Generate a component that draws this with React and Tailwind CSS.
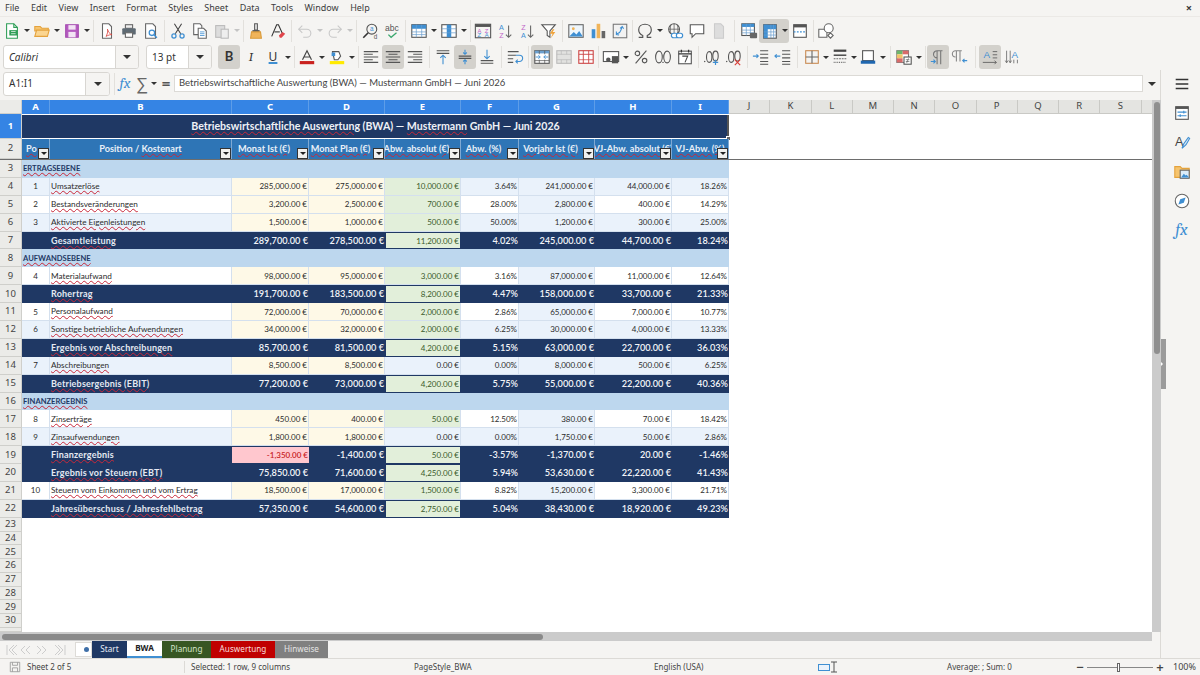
const sheetFont = { fontFamily: "Lato, 'Liberation Sans', sans-serif" }

const rows = [
  { n: 3, type: "section", label: "ERTRAGSEBENE" },
  { n: 4, type: "item", tint: true, pos: 1, label: "Umsatzerlöse", v: ["285,000.00 €", "275,000.00 €", "10,000.00 €", "3.64%", "241,000.00 €", "44,000.00 €", "18.26%"] },
  { n: 5, type: "item", pos: 2, label: "Bestandsveränderungen", v: ["3,200.00 €", "2,500.00 €", "700.00 €", "28.00%", "2,800.00 €", "400.00 €", "14.29%"] },
  { n: 6, type: "item", tint: true, pos: 3, label: "Aktivierte Eigenleistungen", v: ["1,500.00 €", "1,000.00 €", "500.00 €", "50.00%", "1,200.00 €", "300.00 €", "25.00%"] },
  { n: 7, type: "total", label: "Gesamtleistung", v: ["289,700.00 €", "278,500.00 €", "11,200.00 €", "4.02%", "245,000.00 €", "44,700.00 €", "18.24%"] },
  { n: 8, type: "section", label: "AUFWANDSEBENE" },
  { n: 9, type: "item", pos: 4, label: "Materialaufwand", v: ["98,000.00 €", "95,000.00 €", "3,000.00 €", "3.16%", "87,000.00 €", "11,000.00 €", "12.64%"] },
  { n: 10, type: "total", label: "Rohertrag", v: ["191,700.00 €", "183,500.00 €", "8,200.00 €", "4.47%", "158,000.00 €", "33,700.00 €", "21.33%"] },
  { n: 11, type: "item", pos: 5, label: "Personalaufwand", v: ["72,000.00 €", "70,000.00 €", "2,000.00 €", "2.86%", "65,000.00 €", "7,000.00 €", "10.77%"] },
  { n: 12, type: "item", tint: true, pos: 6, label: "Sonstige betriebliche Aufwendungen", v: ["34,000.00 €", "32,000.00 €", "2,000.00 €", "6.25%", "30,000.00 €", "4,000.00 €", "13.33%"] },
  { n: 13, type: "total", label: "Ergebnis vor Abschreibungen", v: ["85,700.00 €", "81,500.00 €", "4,200.00 €", "5.15%", "63,000.00 €", "22,700.00 €", "36.03%"] },
  { n: 14, type: "item", tint: true, pos: 7, label: "Abschreibungen", v: ["8,500.00 €", "8,500.00 €", "0.00 €", "0.00%", "8,000.00 €", "500.00 €", "6.25%"] },
  { n: 15, type: "total", label: "Betriebsergebnis (EBIT)", v: ["77,200.00 €", "73,000.00 €", "4,200.00 €", "5.75%", "55,000.00 €", "22,200.00 €", "40.36%"] },
  { n: 16, type: "section", label: "FINANZERGEBNIS" },
  { n: 17, type: "item", pos: 8, label: "Zinserträge", v: ["450.00 €", "400.00 €", "50.00 €", "12.50%", "380.00 €", "70.00 €", "18.42%"] },
  { n: 18, type: "item", tint: true, pos: 9, label: "Zinsaufwendungen", v: ["1,800.00 €", "1,800.00 €", "0.00 €", "0.00%", "1,750.00 €", "50.00 €", "2.86%"] },
  { n: 19, type: "total", negative: true, label: "Finanzergebnis", v: ["-1,350.00 €", "-1,400.00 €", "50.00 €", "-3.57%", "-1,370.00 €", "20.00 €", "-1.46%"] },
  { n: 20, type: "total", label: "Ergebnis vor Steuern (EBT)", v: ["75,850.00 €", "71,600.00 €", "4,250.00 €", "5.94%", "53,630.00 €", "22,220.00 €", "41.43%"] },
  { n: 21, type: "item", pos: 10, label: "Steuern vom Einkommen und vom Ertrag", v: ["18,500.00 €", "17,000.00 €", "1,500.00 €", "8.82%", "15,200.00 €", "3,300.00 €", "21.71%"] },
  { n: 22, type: "total", label: "Jahresüberschuss / Jahresfehlbetrag", v: ["57,350.00 €", "54,600.00 €", "2,750.00 €", "5.04%", "38,430.00 €", "18,920.00 €", "49.23%"] },
]

const valueCols = ["w-[77px]", "w-[76px]", "w-[76px]", "w-[58px]", "w-[76px]", "w-[77px]", "w-[57px]"]
const restCols = ["J", "K", "L", "M", "N", "O", "P", "Q", "R", "S"]
const emptyRows = [23, 24, 25, 26, 27, 28, 29, 30]

const wavy = "underline decoration-wavy decoration-[#c8283a] decoration-[0.7px] underline-offset-1"

// toolbar pieces
const S = ({ children, vb = "0 0 20 20", className = "w-[18px] h-[18px]" }) => (
  <svg viewBox={vb} className={className} fill="none" strokeWidth="1.2">{children}</svg>
)

function Tool({ children, active, className = "" }) {
  return (
    <div className={`w-[22px] h-[24px] shrink-0 flex items-center justify-center rounded-[3px] ${active ? "bg-[#d3d1cc]" : ""} ${className}`}>
      {children}
    </div>
  )
}

const Arrow = ({ dim, className = "w-[8px]" }) => (
  <div className={`h-[24px] shrink-0 flex items-center justify-center ${className}`}>
    <div className={`w-0 h-0 border-l-[3px] border-r-[3px] border-t-[3px] border-l-transparent border-r-transparent ${dim ? "border-t-[#c4c4c4]" : "border-t-[#333]"}`} />
  </div>
)

const Sep = ({ className = "w-[5px]" }) => (
  <div className={`shrink-0 h-[22px] flex justify-center ${className}`}>
    <div className="w-px h-full bg-[#e2e0dc]" />
  </div>
)

const gr = "#555"
const bl = "#3f8fd2"

const NewDoc = () => <S><path d="M4 2h8l4 4v12H4z" stroke="#2f9e57" fill="#fff" /><path d="M12 2v4h4" stroke="#2f9e57" /><rect x="7" y="9" width="9" height="6" fill="#2f9e57" /><path d="M9 10.5h5M9 13h5" stroke="#fff" strokeWidth=".8" /></S>
const Open = () => <S><path d="M2 5h6l2 2h7v3H2z" fill="#f6c46e" stroke="#e4a23c" /><path d="M2 16l2-7h14l-2 7z" fill="#fbd590" stroke="#e4a23c" /></S>
const Save = () => <S><path d="M3 3h14v14H3z" fill="#b55bc0" stroke="#a349ae" /><rect x="6" y="3.5" width="8" height="5" fill="#f2e3f4" /><rect x="6" y="11" width="8" height="6" fill="#f2e3f4" /></S>
const Pdf = () => <S><path d="M5 2h7l3 3v13H5z" fill="#fff" stroke="#666" /><path d="M9 16c2-4 2-6 1.5-8 1 3 2 5 5 6-2 0-4 .5-6.500 2z" stroke="#d9403a" strokeWidth=".9" /></S>
const Print = () => <S><rect x="6" y="3" width="8" height="4" fill="#eee" stroke="#666" /><rect x="2.500" y="7" width="15" height="7" rx="1" fill="#5e6a73" /><rect x="6" y="12" width="8" height="5" fill="#fff" stroke="#666" /></S>
const Preview = () => <S><path d="M4 2h8l3 3v13H4z" fill="#fff" stroke="#666" /><circle cx="11" cy="12" r="3" stroke={bl} strokeWidth="1.400" /><path d="M13 14l3.500 3.500" stroke={bl} strokeWidth="1.600" /></S>
const Cut = () => <S><path d="M6 2l7 11M14 2L7 13" stroke="#444" /><circle cx="5.500" cy="15.500" r="2.300" stroke={bl} strokeWidth="1.400" /><circle cx="14.500" cy="15.500" r="2.300" stroke={bl} strokeWidth="1.400" /></S>
const Copy = () => <S><path d="M3 2h7l2 2v10H3z" fill="#fff" stroke="#666" /><path d="M8 7h6l3 3v8H8z" fill="#fff" stroke="#666" /><path d="M10 11h5M10 13h5M10 15h5" stroke={bl} strokeWidth=".9" /></S>
const Paste = () => <S><rect x="3" y="4" width="10" height="13" fill="#ddd" stroke="#bbb" /><rect x="9" y="8" width="8" height="10" fill="#eee" stroke="#bbb" /></S>
const Clone = () => <S><path d="M8.500 2h3v7h-3z" stroke="#555" fill="#eee" /><path d="M6 9h8v2H6z" fill="#555" /><path d="M5 11h10l1 7H4z" fill="#f0b45a" stroke="#d99a3a" /></S>
const Clear = () => <S><path d="M3 16L8.500 3h2L15 13" stroke="#333" /><path d="M6 11h6" stroke="#333" /><path d="M11 15l4-4 3 2-4 4.500h-2z" fill="#e0454b" /></S>
const Undo = () => <S><path d="M7 4L3 8l4 4" stroke="#c8c8c8" /><path d="M3 8h9a4 4 0 010 9H8" stroke="#c8c8c8" /></S>
const Redo = () => <S><path d="M13 4l4 4-4 4" stroke="#c8c8c8" /><path d="M17 8H8a4 4 0 000 9h4" stroke="#c8c8c8" /></S>
const Find = () => <S><circle cx="12" cy="8" r="5.500" stroke={gr} /><path d="M8 12l-5.500 5.500" stroke="#333" strokeWidth="1.800" /><text x="12" y="10.500" fontSize="7" textAnchor="middle" fill={bl} fontFamily="Liberation Sans">a</text><text x="16" y="19" fontSize="7" textAnchor="middle" fill="#555" fontFamily="Liberation Sans">d</text></S>
const Spell = () => <S><text x="10" y="10" fontSize="9.500" textAnchor="middle" fill="#555" fontFamily="Liberation Sans">abc</text><path d="M6 14l3 3 6-5" stroke="#3aa76d" strokeWidth="1.400" /></S>
const RowTable = () => <S><rect x="2" y="3" width="16" height="14" stroke="#555" fill="#fff" /><rect x="2" y="3" width="16" height="4.500" fill={bl} /><path d="M2 11h16M2 14h16M7 3v14M13 3v14" stroke="#6b9fce" strokeWidth=".8" /></S>
const ColTable = () => <S><rect x="2" y="3" width="16" height="14" stroke="#555" fill="#fff" /><rect x="7.500" y="3" width="5" height="14" fill={bl} /><path d="M2 7.500h16M2 12h16" stroke="#6b9fce" strokeWidth=".8" /></S>
const SortAll = () => <S><rect x="1.500" y="2.500" width="17" height="15" stroke="#555" /><rect x="1.500" y="2.500" width="17" height="3" fill="#555" /><text x="6" y="12" fontSize="6.500" fill="#c065c8" textAnchor="middle" fontFamily="Liberation Sans">A</text><text x="6" y="17" fontSize="6.500" fill="#3f8fd2" textAnchor="middle" fontFamily="Liberation Sans">Z</text><text x="14" y="12" fontSize="6.500" fill="#c065c8" textAnchor="middle" fontFamily="Liberation Sans">Z</text><text x="14" y="17" fontSize="6.500" fill="#3f8fd2" textAnchor="middle" fontFamily="Liberation Sans">A</text></S>
const SortAsc = () => <S><text x="6" y="9" fontSize="8" fill="#3f8fd2" textAnchor="middle" fontFamily="Liberation Sans">A</text><text x="6" y="18" fontSize="8" fill="#c065c8" textAnchor="middle" fontFamily="Liberation Sans">Z</text><path d="M14 4v13M11 14l3 3 3-3" stroke="#666" /></S>
const SortDesc = () => <S><text x="6" y="9" fontSize="8" fill="#c065c8" textAnchor="middle" fontFamily="Liberation Sans">Z</text><text x="6" y="18" fontSize="8" fill="#3f8fd2" textAnchor="middle" fontFamily="Liberation Sans">A</text><path d="M14 4v13M11 14l3 3 3-3" stroke="#666" /></S>
const Filter = () => <S><path d="M2 3h15l-6 7v7l-3-2v-5z" stroke="#555" fill="#fff" /><path d="M14 8l-3 5h3l-2 5 5-7h-3l2-3z" fill="#f0a33a" /></S>
const Image = () => <S><rect x="2" y="3" width="16" height="14" stroke="#666" fill="#eef6fc" /><circle cx="7" cy="7.500" r="1.600" fill="#f0b45a" /><path d="M2.500 16l5-5 3 3 3-4 4 6z" fill={bl} /></S>
const Chart = () => <S><rect x="3" y="8" width="4" height="10" fill={bl} /><rect x="8.500" y="2" width="4" height="16" fill="#f0b45a" /><rect x="14" y="10" width="4" height="8" fill="#666" /></S>
const Pivot = () => <S><rect x="2.500" y="2.500" width="15" height="15" stroke="#777" fill="#f2f2f2" /><path d="M6 13c3 0 5-2 6-7M10 7l2.500-2 1.500 2.500M6 10.500L6 14l3 .5" stroke={bl} /></S>
const Omega = () => <S><path d="M3 17h4.500v-2C4.500 13.500 3 11 3 8.500 3 5 6 2.500 10 2.500S17 5 17 8.500c0 2.500-1.500 5-4.500 6.500v2H17" stroke="#555" strokeWidth="1.300" /></S>
const Link = () => <S><circle cx="9" cy="8" r="6" stroke="#555" /><path d="M3 8h12M9 2v12M5.500 3c-1 3-1 7 0 10M12.500 3c1 3 1 7 0 10" stroke="#555" strokeWidth=".8" /><rect x="6" y="12.500" width="7" height="5" rx="2.500" stroke={bl} fill="#fff" strokeWidth="1.300" /><rect x="11.500" y="12.500" width="7" height="5" rx="2.500" stroke={bl} fill="#fff" strokeWidth="1.300" /></S>
const Comment = () => <S><path d="M2.500 3h15v10h-9l-4 4v-4h-2z" stroke="#555" fill="#fff" /></S>
const HeadFoot = () => <S><path d="M5 2h7l3 3v13H5z" fill="#ddd" stroke="#ccc" /></S>
const PrintArea = () => <S><rect x="2" y="2" width="14" height="13" stroke="#555" fill="#fff" /><rect x="2" y="2" width="14" height="3.500" fill={bl} /><path d="M2 9h14M2 12h14M7 2v13M11.500 2v13" stroke="#6b9fce" strokeWidth=".8" /><rect x="11" y="12" width="8" height="6" rx="1" fill="#666" /></S>
const Freeze = () => <S><rect x="3" y="3" width="14" height="15" fill="#fff" stroke="#555" /><rect x="3" y="3" width="14" height="5" fill={bl} /><rect x="3" y="3" width="4.500" height="15" fill={bl} /><path d="M3 11h14M3 14.500h14M11 3v15M14 3v15" stroke="#6b9fce" strokeWidth=".8" /></S>
const Split = () => <S><rect x="3" y="3" width="14" height="14" stroke="#555" fill="#fff" /><rect x="3" y="3" width="14" height="3" fill="#555" /><path d="M3 11h14" stroke={bl} strokeDasharray="2 1.500" /></S>
const Shapes = () => <S><path d="M2 8h9v9H2z" stroke="#666" fill="#fff" /><circle cx="13" cy="7" r="5" stroke="#666" fill="#fff" /><path d="M15 12l3 3-3 3-3-3z" stroke="#666" fill="#fff" /></S>

const Lines = ({ d, color = "#555" }) => <S><path d={d} stroke={color} /></S>
const Wrap = () => <S><path d="M2 4h12M2 8h9M2 12h6M2 16h6" stroke="#555" /><path d="M11 8h4a2 2 0 010 7h-4M13 13l-2 2 2 2" stroke={bl} /></S>
const VTop = () => <S><path d="M3 3h14M3 6h14" stroke="#555" /><path d="M10 18V9M7 11l3-3 3 3" stroke={bl} /></S>
const VMid = () => <S><path d="M3 9h14M3 11.500h14" stroke="#555" /><path d="M10 2v5M8 5l2 2 2-2M10 18v-5M8 15l2-2 2 2" stroke={bl} /></S>
const VBot = () => <S><path d="M3 14h14M3 17h14" stroke="#555" /><path d="M10 2v9M7 9l3 3 3-3" stroke={bl} /></S>
const Merge = () => <S><rect x="2" y="3" width="16" height="14" stroke="#555" fill="#fff" /><rect x="2" y="3" width="16" height="3" fill="#6b9fce" /><path d="M2 14h16M7 3v4M13 3v4M7 13v4M13 13v4" stroke="#555" strokeWidth=".8" /><path d="M3 10h5M6 8l2 2-2 2M17 10h-5M14 8l-2 2 2 2" stroke={bl} strokeWidth="1" /></S>
const Merged = () => <S><rect x="2" y="3" width="16" height="14" stroke="#bbb" fill="#e2e2e0" /><path d="M2 7h16M2 13h16M7 3v4M13 3v4M7 13v4M13 13v4" stroke="#bbb" strokeWidth=".8" /></S>
const Unmerge = () => <S><rect x="2" y="3" width="16" height="14" stroke="#c44" fill="#fff" /><path d="M2 7h16M7 3v14M13 3v14" stroke="#c44" strokeWidth="1" /><path d="M2 13h16" stroke="#c44" strokeWidth=".8" /></S>
const NumFmt = () => <S><rect x="1.500" y="4" width="17" height="11" stroke="#555" fill="#fff" /><circle cx="7" cy="13" r="2.500" fill="#555" /><rect x="11" y="9" width="7" height="8" fill="#555" /></S>
const Percent = () => <S vb="0 0 20 20"><path d="M16 3L4 17" stroke="#555" /><circle cx="6" cy="6" r="2.500" stroke="#555" /><circle cx="14" cy="14" r="2.500" stroke="#555" /></S>
const NumZero = () => <S><ellipse cx="5.500" cy="10" rx="3.700" ry="6.500" stroke="#555" /><ellipse cx="14.500" cy="10" rx="3.700" ry="6.500" stroke="#555" /><circle cx="10" cy="16" r=".8" fill="#555" /></S>
const DateIcon = () => <S><rect x="3" y="3.500" width="14" height="14" stroke="#555" fill="#fff" /><path d="M3 6.500h14M6 2v3M14 2v3" stroke="#333" strokeWidth="1.400" /><path d="M7 9h6l-3 7" stroke="#444" /></S>
const DecAdd = () => <S><circle cx="3" cy="15" r=".8" fill="#555" /><ellipse cx="8" cy="10" rx="3" ry="6" stroke="#555" /><ellipse cx="15" cy="9" rx="3" ry="5.500" stroke="#555" /><path d="M15 13v6M12 16h6" stroke={bl} strokeWidth="1.300" /></S>
const DecDel = () => <S><circle cx="3" cy="15" r=".8" fill="#555" /><ellipse cx="8" cy="10" rx="3" ry="6" stroke="#555" /><ellipse cx="15" cy="9" rx="3" ry="5.500" stroke="#555" /><path d="M12 13l6 6M18 13l-6 6" stroke="#d9403a" strokeWidth="1.300" /></S>
const Indent = () => <S><path d="M9 3h9M9 7h9M9 11h9M9 15h9M9 18h9" stroke="#555" /><path d="M1 9h6M5 7l2 2-2 2" stroke={bl} /></S>
const Outdent = () => <S><path d="M9 3h9M9 7h9M9 11h9M9 15h9M9 18h9" stroke="#555" /><path d="M7 9H1M3 7L1 9l2 2" stroke={bl} /></S>
const Borders = () => <S><rect x="3" y="3" width="14" height="14" stroke="#c98a52" /><path d="M10 3v14M3 10h14" stroke="#666" /></S>
const BorderStyle = () => <S><path d="M3 3h14" stroke="#444" strokeWidth="2.500" /><path d="M3 8h14" stroke="#444" strokeWidth="1.600" /><path d="M3 12h14" stroke="#666" strokeDasharray="2 1" /><path d="M3 16h14" stroke="#666" strokeDasharray="1 1" /></S>
const BorderColor = () => <S><rect x="4" y="3" width="12" height="11" stroke="#555" fill="#fff" /><rect x="2" y="14" width="16" height="3.500" fill="#1f67b0" /></S>
const Cond = () => <S><rect x="2" y="3" width="13" height="13" fill="#fff" stroke="#777" /><rect x="2" y="3" width="6.500" height="4" fill="#6cb56c" /><rect x="8.500" y="3" width="6.500" height="4" fill="#d96a6a" /><rect x="2" y="7" width="6.500" height="4.500" fill="#f0c36a" /><rect x="2" y="11.500" width="6.500" height="4.500" fill="#d96a6a" /><rect x="10" y="10" width="8" height="8" fill="#fff" stroke="#555" /><path d="M12 13h4M12 15h4M15 11.500l-2 5" stroke="#555" strokeWidth=".7" /></S>
const ParaLtr = () => <S><path d="M9 3v15M13 3v15M15 3H9a4 4 0 000 8" stroke="#777" /><path d="M2 15h5M5 13l2 2-2 2" stroke={bl} /></S>
const ParaRtl = () => <S><path d="M6 3v12M10 3v12M12 3H5a3.500 3.500 0 000 7" stroke="#888" /><path d="M18 14h-5M15 12l-2 2 2 2" stroke={bl} /></S>
const TextH = () => <S><text x="6.500" y="11" fontSize="11" fill={bl} textAnchor="middle" fontFamily="Liberation Sans">A</text><path d="M13 4h5M13 7.500h5M13 11h5M2 16h15" stroke="#555" strokeWidth=".9" /><path d="M15 14l2 2-2 2" stroke="#555" strokeWidth=".9" /></S>
const TextV = () => <S><text x="13" y="11" fontSize="11" fill={bl} textAnchor="middle" fontFamily="Liberation Sans">A</text><path d="M4 3v13M8 3v13M12 13v4M16 13v4" stroke="#666" strokeWidth=".9" /><path d="M2.500 14L4 16.500 5.500 14M6.500 14L8 16.500 9.500 14" stroke="#666" strokeWidth=".9" /></S>

const alignLeft = "M2 4h16M2 7h10M2 10h16M2 13h10M2 16h16"
const alignCenter = "M2 4h16M5 7h10M2 10h16M5 13h10M2 16h16"
const alignRight = "M2 4h16M8 7h10M2 10h16M8 13h10M2 16h16"

function Combo({ className, value, italic, buttonClass = "w-[23px]" }) {
  return (
    <div className={`h-[24px] shrink-0 flex border border-[#d8d6d2] rounded-[3px] bg-white overflow-hidden ${className}`}>
      <div className={`flex-1 flex items-center px-[5px] text-[10px] text-[#333] ${italic ? "italic" : ""}`}>{value}</div>
      <div className={`${buttonClass} flex items-center justify-center bg-[#f5f4f2] border-l border-[#d8d6d2]`}>
        <div className="w-0 h-0 border-l-[4px] border-r-[4px] border-t-[4px] border-l-transparent border-r-transparent border-t-[#333]" />
      </div>
    </div>
  )
}

function AutoFilter() {
  return (
    <div className="absolute bottom-0 right-0 w-[11px] h-[11px] flex items-center justify-center bg-[#f0f0ee] border border-[#333]">
      <div className="w-0 h-0 border-l-[3px] border-r-[3px] border-t-[3px] border-l-transparent border-r-transparent border-t-[#222]" />
    </div>
  )
}

function RowHead({ n, active, className = "h-[17.9px]" }) {
  return (
    <div className={`w-[22px] shrink-0 flex items-center justify-center text-[9.5px] border-b border-r border-[#cfcfcb] ${active ? "bg-[#3584e4] text-white font-bold" : "bg-[#ebebe8] text-[#444]"} ${className}`} style={{ fontFamily: "'Noto Sans', sans-serif" }}>
      {n}
    </div>
  )
}

function ColHead({ label, className }) {
  return (
    <div className={`h-full shrink-0 flex items-center justify-center bg-[#3584e4] border-r border-[#5d9de8] text-white text-[9.5px] font-bold ${className}`} style={{ fontFamily: "'Noto Sans', sans-serif" }}>
      {label}
    </div>
  )
}

function HeaderCell({ label, className, wave = true, clip }) {
  return (
    <div className={`relative h-full shrink-0 flex items-center justify-center overflow-hidden bg-[#2e75b6] border-r border-[#7fa9d3] text-[#e8f0f8] text-[9.2px] font-bold whitespace-nowrap pb-[1px] ${className}`}>
      <span className={`${wave ? wavy : ""} ${clip ? "mr-[12px]" : ""}`}>{label}</span>
      <AutoFilter />
    </div>
  )
}

function DataRow({ row }) {
  if (row.type === "section") {
    return (
      <div className="flex h-[17.9px]">
        <RowHead n={row.n} />
        <div className="w-[707px] bg-[#bdd7ee] pl-px flex items-center text-[7.6px] font-bold text-[#1f3864]">
          <span className={wavy}>{row.label}</span>
        </div>
      </div>
    )
  }
  if (row.type === "total") {
    return (
      <div className="flex h-[17.9px]">
        <RowHead n={row.n} />
        <div className="w-[28px] bg-[#1f3864] border-r border-[#1f3864]" />
        <div className="w-[182px] bg-[#1f3864] flex items-center pl-px text-[9px] font-bold text-[#e4e9f2] tracking-[0.2px]">
          <span className={wavy}>{row.label}</span>
        </div>
        {row.v.map((val, i) => {
          const negCell = row.negative && i === 0
          const green = i === 2
          return (
            <div
              key={i}
              className={`${valueCols[i]} shrink-0 flex items-center justify-end pr-[1px] ${negCell ? "bg-[#ffc7ce] text-[#c81e1e] text-[8px] font-semibold border-t border-b border-[#1f3864]" : green ? "bg-[#e2efda] text-[#3b5b2b] text-[8px] border border-[#1f3864]" : "bg-[#1f3864] text-[#f2f4f8] text-[9.2px] font-semibold"}`}
            >
              {val}
            </div>
          )
        })}
      </div>
    )
  }
  const base = row.tint ? "bg-[#eaf2fb]" : "bg-white"
  return (
    <div className="flex h-[17.9px] text-[8px] text-[#2c2c2c]">
      <RowHead n={row.n} />
      <div className={`w-[28px] shrink-0 flex items-center justify-center border-r border-b border-[#d4e0ee] ${base}`}>{row.pos}</div>
      <div className={`w-[182px] shrink-0 flex items-center pl-px text-[8.2px] border-r border-b border-[#d4e0ee] whitespace-nowrap ${base}`}>
        <span className={wavy}>{row.label}</span>
      </div>
      {row.v.map((val, i) => {
        let bg = base
        if (i < 2) bg = "bg-[#fef9e7]"
        if (i === 2 && val !== "0.00 €") bg = "bg-[#e2efda] text-[#3b5b2b]"
        if (i === 4) bg = "bg-[#eaf2fb]"
        return (
          <div key={i} className={`${valueCols[i]} shrink-0 flex items-center justify-end pr-[1px] border-r border-b border-[#d4e0ee] ${bg}`}>
            {val}
          </div>
        )
      })}
    </div>
  )
}

export default function App() {
  return (
    <div className="w-[1200px] h-[675px] overflow-hidden flex flex-col bg-[#f5f4f2] text-[#333]" style={{ fontFamily: "'Noto Sans', sans-serif" }}>
      {/* Menu */}
      <div className="h-[17px] shrink-0 flex items-center pl-[5px] pr-[8px] text-[9px] text-[#3c3c3c] gap-[11.5px] border-b border-[#ebe9e6]">
        {["File", "Edit", "View", "Insert", "Format", "Styles", "Sheet", "Data", "Tools", "Window", "Help"].map((m) => (
          <span key={m}>{m}</span>
        ))}
        <span className="ml-auto font-bold text-[11px]">×</span>
      </div>

      {/* Standard toolbar */}
      <div className="h-[27px] shrink-0 flex items-center pl-px">
        <Tool><NewDoc /></Tool><Arrow />
        <Tool><Open /></Tool><Arrow />
        <Tool><Save /></Tool><Arrow />
        <Sep />
        <Tool><Pdf /></Tool><Tool><Print /></Tool><Tool><Preview /></Tool>
        <Sep />
        <Tool><Cut /></Tool><Tool><Copy /></Tool><Tool><Paste /></Tool><Arrow dim />
        <Sep className="w-[4px]" />
        <Tool><Clone /></Tool><Tool><Clear /></Tool>
        <Sep />
        <Tool><Undo /></Tool><Arrow dim />
        <Tool><Redo /></Tool><Arrow dim />
        <Sep />
        <Tool><Find /></Tool><Tool><Spell /></Tool>
        <Sep />
        <Tool><RowTable /></Tool><Arrow />
        <Tool><ColTable /></Tool><Arrow />
        <Sep className="w-[4px]" />
        <Tool><SortAll /></Tool><Tool><SortAsc /></Tool><Tool><SortDesc /></Tool><Tool><Filter /></Tool>
        <Sep />
        <Tool><Image /></Tool><Tool><Chart /></Tool><Tool><Pivot /></Tool>
        <Sep className="w-[3px]" />
        <Tool><Omega /></Tool><Arrow />
        <Tool><Link /></Tool><Tool><Comment /></Tool><Tool><HeadFoot /></Tool>
        <Sep className="w-[8px]" />
        <Tool><PrintArea /></Tool>
        <div className="flex rounded-[3px] bg-[#d3d1cc] ml-[-1px]"><Tool><Freeze /></Tool><Arrow /></div>
        <Tool><Split /></Tool>
        <Sep className="w-[4px]" />
        <Tool><Shapes /></Tool>
      </div>

      {/* Formatting toolbar */}
      <div className="h-[26px] shrink-0 flex items-center pl-[3px]">
        <Combo className="w-[136px]" value="Calibri" italic />
        <Combo className="w-[66px] ml-[7px]" value="13 pt" />
        <Tool active className="ml-[6px] font-bold text-[13px]"><span style={sheetFont}>B</span></Tool>
        <Tool className="italic text-[13px]"><span className="font-serif">I</span></Tool>
        <Tool className="w-[20px] text-[12px]"><span className="underline decoration-[#3f8fd2] decoration-2">U</span></Tool>
        <Arrow />
        <Sep className="w-[4px]" />
        <Tool><S><path d="M5 13L10 3l5 10M7 10h6" stroke="#444" strokeWidth="1.300" /><rect x="2" y="14.500" width="16" height="3.500" fill="#c9211e" /></S></Tool><Arrow />
        <Tool><S><path d="M5 4h7l2 5-3 4H7z" fill="#fff" stroke="#555" /><path d="M4 5h4v4H4z" fill={bl} /><rect x="2" y="14.500" width="16" height="3.500" fill="#ffea00" /></S></Tool><Arrow />
        <Sep className="w-[4px]" />
        <Tool><Lines d={alignLeft} /></Tool>
        <Tool active><Lines d={alignCenter} /></Tool>
        <Tool><Lines d={alignRight} /></Tool>
        <Sep className="w-[6px]" />
        <Tool><VTop /></Tool>
        <Tool active><VMid /></Tool>
        <Tool><VBot /></Tool>
        <Sep className="w-[6px]" />
        <Tool><Wrap /></Tool>
        <Sep className="w-[5px]" />
        <Tool active><Merge /></Tool><Tool><Merged /></Tool><Tool><Unmerge /></Tool>
        <Sep className="w-[3px]" />
        <Tool><NumFmt /></Tool><Arrow />
        <Tool><Percent /></Tool><Tool><NumZero /></Tool><Tool><DateIcon /></Tool>
        <Sep className="w-[4px]" />
        <Tool><DecAdd /></Tool><Tool><DecDel /></Tool>
        <Sep className="w-[6px]" />
        <Tool><Indent /></Tool><Tool><Outdent /></Tool>
        <Sep className="w-[7px]" />
        <Tool><Borders /></Tool><Arrow className="w-[6px]" />
        <Tool><BorderStyle /></Tool><Arrow className="w-[6px]" />
        <Tool><BorderColor /></Tool><Arrow />
        <Sep className="w-[6px]" />
        <Tool><Cond /></Tool><Arrow />
        <Sep className="w-[4px]" />
        <Tool active><ParaLtr /></Tool><Tool><ParaRtl /></Tool>
        <Sep className="w-[8px]" />
        <Tool active><TextH /></Tool><Tool><TextV /></Tool>
      </div>

      <div className="flex-1 min-h-0 flex">
        <div className="w-[1161px] shrink-0 flex flex-col border-r border-[#dcdad6]">
          {/* Formula bar */}
          <div className="h-[30px] shrink-0 flex items-center pl-[3px] pb-[3px]">
            <Combo className="w-[107px]" value="A1:I1" buttonClass="w-[24px]" />
            <Sep className="w-[5px] ml-[2px]" />
            <div className="w-[16px] text-[15px] italic font-serif text-[#3f8fd2] text-center leading-none">fx</div>
            <div className="w-[16px] ml-[1px] text-[17px] text-[#666] text-center leading-none">∑</div>
            <Arrow />
            <div className="w-[16px] text-[15px] text-[#555] text-center leading-none font-bold">=</div>
            <div className="w-[970px] h-[17px] bg-white border border-[#dcdad6] flex items-center px-[4px] text-[9.5px] text-[#444] whitespace-nowrap" style={sheetFont}>
              Betriebswirtschaftliche Auswertung (BWA) — Mustermann GmbH — Juni 2026
            </div>
            <div className="w-[17px] flex justify-center">
              <div className="w-0 h-0 border-l-[4px] border-r-[4px] border-t-[4px] border-l-transparent border-r-transparent border-t-[#333]" />
            </div>
          </div>

          {/* Sheet */}
          <div className="h-[532px] shrink-0 flex">
            <div className="w-[1152px] shrink-0 bg-white overflow-hidden" style={sheetFont}>
              <div className="h-[14px] flex">
                <div className="w-[22px] shrink-0 bg-[#ebebe8] border-r border-b border-[#cfcfcb]" />
                <ColHead label="A" className="w-[28px]" />
                <ColHead label="B" className="w-[182px]" />
                <ColHead label="C" className="w-[77px]" />
                <ColHead label="D" className="w-[76px]" />
                <ColHead label="E" className="w-[76px]" />
                <ColHead label="F" className="w-[58px]" />
                <ColHead label="G" className="w-[76px]" />
                <ColHead label="H" className="w-[77px]" />
                <ColHead label="I" className="w-[57px]" />
                {restCols.map((c) => (
                  <div key={c} className="w-[41.25px] shrink-0 flex items-center justify-center bg-[#e4e4e1] border-r border-b border-[#c9c9c5] text-[9.5px] text-[#444]" style={{ fontFamily: "'Noto Sans', sans-serif" }}>{c}</div>
                ))}
                <div className="flex-1 bg-[#e4e4e1] border-b border-[#c9c9c5]" />
              </div>

              {/* Title row */}
              <div className="flex h-[25px]">
                <RowHead n={1} active className="h-[25px]" />
                <div className="relative w-[707px] h-[25px] bg-[#1f3864] border-y border-white flex items-center justify-center text-[10.6px] font-bold text-[#eef1f6] whitespace-nowrap">
                  <span><span className={wavy}>Betriebswirtschaftliche Auswertung</span> (BWA) — <span className={wavy}>Mustermann</span> GmbH — Juni 2026</span>
                  <div className="absolute top-0 bottom-0 right-0 w-[2px] bg-[#555]" />
                  <div className="absolute bottom-[-3px] right-[-2px] w-[5px] h-[5px] bg-[#666] border border-white" />
                </div>
              </div>

              {/* Column titles */}
              <div className="flex h-[21px] border-b border-[#6d6d6d]">
                <RowHead n={2} className="h-[20px]" />
                <HeaderCell label="Po" className="w-[28px] !justify-start pl-[4px]" />
                <HeaderCell label={<>Position / <span className={wavy}>Kostenart</span></>} wave={false} className="w-[182px]" />
                <HeaderCell label="Monat Ist (€)" clip className="w-[77px]" />
                <HeaderCell label="Monat Plan (€)" clip className="w-[76px]" />
                <HeaderCell label="Abw. absolut (€)" clip className="w-[76px]" />
                <HeaderCell label="Abw. (%)" clip className="w-[58px]" />
                <HeaderCell label="Vorjahr Ist (€)" clip className="w-[76px]" />
                <HeaderCell label="VJ-Abw. absolut (€)" className="w-[77px]" />
                <HeaderCell label="VJ-Abw. (%)" className="w-[57px]" />
              </div>

              {rows.map((row) => (
                <DataRow key={row.n} row={row} />
              ))}

              {emptyRows.map((n) => (
                <RowHead key={n} n={n} className="h-[13.75px]" />
              ))}
              <RowHead n="" className="h-[4px]" />
            </div>

            {/* Vertical scrollbar */}
            <div className="w-[9px] shrink-0 bg-[#cbcbcb] pt-[2px] flex justify-center">
              <div className="w-[6px] h-[252px] rounded-full bg-[#8f8f8f]" />
            </div>
          </div>

          {/* Horizontal scrollbar */}
          <div className="h-[9px] shrink-0 w-[1152px] bg-[#cbcbcb] flex items-center pl-[2px]">
            <div className="w-[541px] h-[6px] rounded-full bg-[#8a8a8a]" />
          </div>

          {/* Sheet tabs */}
          <div className="h-[17px] shrink-0 flex items-stretch text-[8.2px]">
            <div className="w-[75px] shrink-0 flex items-center pl-[6px] overflow-hidden">
              <svg viewBox="0 0 60 12" className="w-[60px] h-[12px]" fill="none" stroke="#cdcdcd" strokeWidth="1">
                <path d="M1 1v10M8 1L3 6l5 5M11 1L6 6l5 5M19 2l-4 4 4 4M24 2l-4 4 4 4M31 2l4 4-4 4M36 2l4 4-4 4M49 1l5 5-5 5M52 1l5 5-5 5M59 1v10" />
              </svg>
            </div>
            <div className="w-[17px] shrink-0 flex items-center justify-center bg-white border border-[#dddbd7] my-[1px]">
              <div className="w-[5px] h-[5px] rounded-full bg-[#3f6fa8] ml-[6px]" />
            </div>
            <div className="w-[35px] flex items-center justify-center bg-[#1f3864] text-[#e6ebf4]">Start</div>
            <div className="w-[35px] flex items-center justify-center bg-white font-bold text-[#222] border-b-2 border-[#3f8fd2]">BWA</div>
            <div className="w-[49px] flex items-center justify-center bg-[#375623] text-[#d5e4ca]">Planung</div>
            <div className="w-[64px] flex items-center justify-center bg-[#c00000] text-[#f8dcdc]">Auswertung</div>
            <div className="w-[53px] flex items-center justify-center bg-[#808080] text-[#e5e5e5]">Hinweise</div>
          </div>
        </div>

        {/* Collapse handle + sidebar */}
        <div className="flex-1 relative flex flex-col items-center pt-[5px]">
          <div className="absolute left-0 top-[269px] w-[5px] h-[50px] bg-[#9b9b9b] flex items-center">
            <div className="w-0 h-0 border-t-[2px] border-b-[2px] border-l-[2px] border-t-transparent border-b-transparent border-l-white" />
          </div>
          <div className="flex flex-col items-center gap-[11.2px] ml-[2px]">
            <S><path d="M3 5h14M3 10h14M3 15h14" stroke="#333" strokeWidth="1.500" /></S>
            <S><rect x="3" y="3" width="14" height="14" stroke="#555" fill="#fff" /><rect x="3" y="3" width="14" height="2.500" fill="#555" /><path d="M5 9h10M5 13h10" stroke={bl} /><path d="M12 7.500v3M8 11.500v3" stroke={bl} /></S>
            <S><text x="7" y="14" fontSize="14" fill="#444" textAnchor="middle" fontFamily="Liberation Sans">A</text><path d="M10 17l2-5 5-7 1.500 1-4 7z" stroke={bl} fill="#d8e8f5" /></S>
            <S><path d="M2 4h6l2 2h8v10H2z" fill="#f6c46e" stroke="#e4a23c" /><rect x="8" y="8" width="10" height="9" fill="#dcecf8" stroke="#666" /><path d="M9 16l3-4 2 2 1-1 3 3z" fill={bl} /></S>
            <S><circle cx="10" cy="10" r="7.500" stroke="#666" fill="#fff" /><path d="M14 6l-2 6-6 2 2-6z" fill={bl} /></S>
            <div className="w-[18px] h-[18px] text-[17px] leading-none italic font-serif text-[#3f8fd2] text-center">fx</div>
          </div>
        </div>
      </div>

      {/* Status bar */}
      <div className="h-[17px] shrink-0 flex items-center border-t border-[#dcdad6] text-[8px] text-[#444] whitespace-nowrap">
        <div className="w-[27px] shrink-0 flex justify-center pl-[3px]">
          <svg viewBox="0 0 14 14" className="w-[12px] h-[12px]" fill="none" stroke="#999"><path d="M1.500 1.500h11v11h-11zM4 1.500v3.500h6V1.500M4 12.500V8h6v4.500" /></svg>
        </div>
        <div className="w-[157px] shrink-0">Sheet 2 of 5</div>
        <div className="w-[223px] shrink-0 border-l border-[#dcdad6] pl-[6px]">Selected: 1 row, 9 columns</div>
        <div className="w-[240px] shrink-0 pl-[7px]">PageStyle_BWA</div>
        <div className="w-[164px] shrink-0 pl-[7px]">English (USA)</div>
        <div className="w-[136px] shrink-0 flex items-center pl-[7px] gap-px">
          <div className="w-[12px] h-[7px] border border-[#3f8fd2] bg-[#eaf2fb]" />
          <svg viewBox="0 0 6 12" className="w-[6px] h-[12px]" fill="none" stroke="#555"><path d="M0 1h6M0 11h6M3 1v10" /></svg>
        </div>
        <div className="w-[65px] shrink-0 text-center">Average: ; Sum: 0</div>
        <div className="w-[61px] shrink-0" />
        <div className="w-[14px] shrink-0 text-center text-[13px] leading-none font-semibold">−</div>
        <div className="w-[66px] shrink-0 h-px bg-[#888] relative">
          <div className="absolute left-[30px] top-[-4px] w-[3px] h-[9px] bg-white border border-[#666]" />
        </div>
        <div className="w-[14px] shrink-0 text-center text-[13px] leading-none font-semibold">+</div>
        <div className="ml-[6px] text-[9px]">100%</div>
      </div>
    </div>
  )
}
